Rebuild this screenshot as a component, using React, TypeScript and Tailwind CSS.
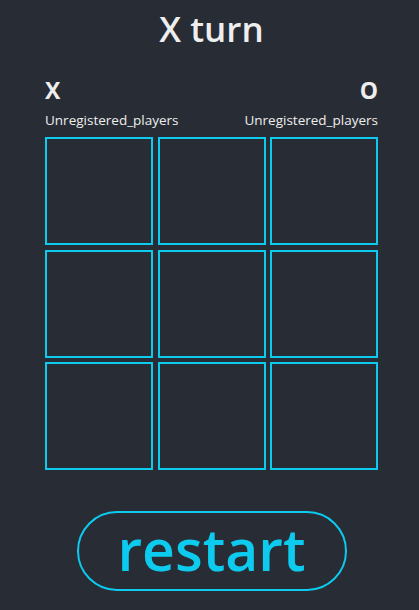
export default function App() {
  const cells = Array.from({ length: 9 });
  return (
    <div
      className="min-h-[610px] w-full bg-[#282c34] flex flex-col items-center pl-[4px] text-[#eeeeee]"
      style={{ fontFamily: '"Open Sans", "Noto Sans", sans-serif' }}
    >
      <h1 className="mt-[6px] text-[35px] font-semibold leading-[46px]">X turn</h1>
      <div className="mt-[22px] w-[333px] flex justify-between">
        <div className="flex flex-col items-start">
          <span className="text-[23px] font-bold leading-[32px]">X</span>
          <span className="mt-[6px] text-[13.5px] leading-[16px]">Unregistered_players</span>
        </div>
        <div className="flex flex-col items-end">
          <span className="text-[23px] font-bold leading-[32px]">O</span>
          <span className="mt-[6px] text-[13.5px] leading-[16px]">Unregistered_players</span>
        </div>
      </div>
      <div className="mt-[9px] grid w-[333px] grid-cols-3 gap-x-[4.5px] gap-y-[4.5px]">
        {cells.map((_, i) => (
          <div key={i} className="h-[108px] border-2 border-[#0ccbef]" />
        ))}
      </div>
      <button className="mt-[41px] flex h-[80px] w-[270px] items-center justify-center rounded-full border-2 border-[#0ccbef] text-[57px] font-semibold leading-none text-[#0ccbef]">
        <span className="-mt-[4px]">restart</span>
      </button>
    </div>
  );
}
